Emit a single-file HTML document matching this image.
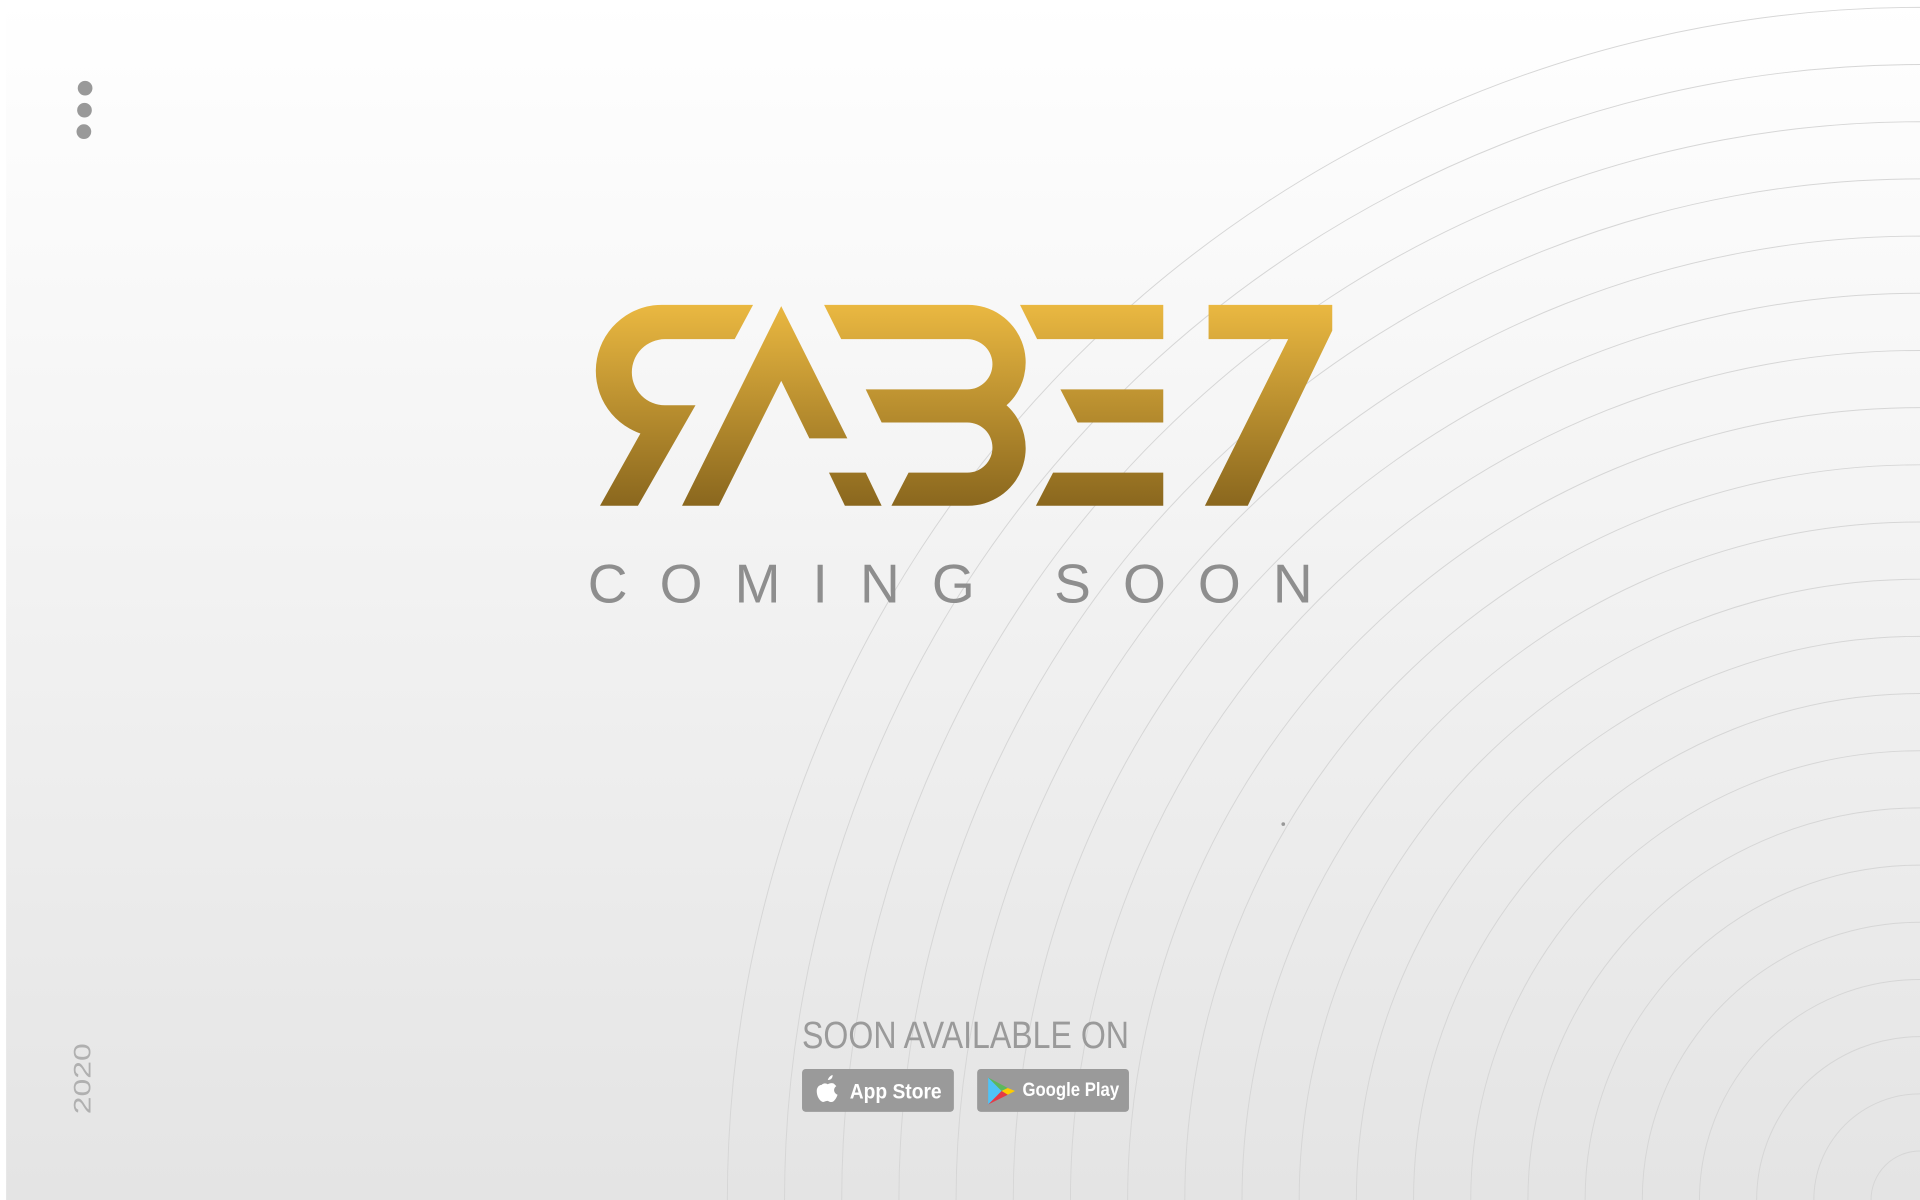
<!DOCTYPE html>
<html><head><meta charset="utf-8"><style>
html,body{margin:0;padding:0;width:1920px;height:1200px;overflow:hidden;background:#fff}
svg{position:absolute;left:0;top:0;display:block}
</style></head><body>
<svg width="1920" height="1200" viewBox="0 0 1568 980" xmlns="http://www.w3.org/2000/svg">
<defs>
<linearGradient id="bg" x1="0" y1="0" x2="0" y2="1"><stop offset="0" stop-color="#ffffff"/><stop offset="1" stop-color="#e4e4e4"/></linearGradient>
<linearGradient id="gold" gradientUnits="userSpaceOnUse" x1="0" y1="249" x2="0" y2="413"><stop offset="0" stop-color="#eab841"/><stop offset="1" stop-color="#8a671e"/></linearGradient>
</defs>
<rect x="0" y="0" width="1568" height="980" fill="url(#bg)"/>
<rect x="0" y="0" width="5" height="980" fill="#fff"/>
<g fill="none" stroke="#d6d6d6" stroke-width="0.8">
<circle cx="1568" cy="980" r="40"/><circle cx="1568" cy="980" r="86.7"/><circle cx="1568" cy="980" r="133.4"/><circle cx="1568" cy="980" r="180.1"/><circle cx="1568" cy="980" r="226.8"/><circle cx="1568" cy="980" r="273.5"/><circle cx="1568" cy="980" r="320.2"/><circle cx="1568" cy="980" r="366.9"/><circle cx="1568" cy="980" r="413.6"/><circle cx="1568" cy="980" r="460.3"/><circle cx="1568" cy="980" r="507"/><circle cx="1568" cy="980" r="553.7"/><circle cx="1568" cy="980" r="600.4"/><circle cx="1568" cy="980" r="647.1"/><circle cx="1568" cy="980" r="693.8"/><circle cx="1568" cy="980" r="740.5"/><circle cx="1568" cy="980" r="787.2"/><circle cx="1568" cy="980" r="833.9"/><circle cx="1568" cy="980" r="880.6"/><circle cx="1568" cy="980" r="927.3"/><circle cx="1568" cy="980" r="974"/>
</g>
<circle cx="1048" cy="673" r="1.5" fill="#999"/>
<g fill="#999"><circle cx="69.5" cy="72" r="6"/><circle cx="69" cy="90" r="6"/><circle cx="68.5" cy="107.5" r="6"/></g>
<g fill="url(#gold)">
<path d="M543,249 L615,249 L600,277 L543,277 A27,27 0 0 0 543,331 L568,331 L521,413 L490,413 L523,354 A54,54 0 0 1 543,249 Z"/>
<path d="M638,250 L692,358 L661,358 L638,311 L587,413 L557,413 Z"/>
<path d="M677,386 L707,386 L720,413 L690,413 Z"/>
<path d="M673,249 L790,249 A47,47 0 0 1 822,331 A47,47 0 0 1 790,413 L728,413 L742,386 L790,386 A20.5,20.5 0 0 0 790,345 L720,345 L707,318 L790,318 A20.5,20.5 0 0 0 790,277 L687,277 Z"/>
<path d="M833,249 L950,249 L950,277 L847,277 Z"/>
<path d="M866,318 L950,318 L950,345 L880,345 Z"/>
<path d="M860,386 L950,386 L950,413 L846,413 Z"/>
<path d="M987,249 L1088,249 L1088,270 L1019,413 L984,413 L1052,277 L987,277 Z"/>
</g>
<text x="480" y="492" font-family="Liberation Sans, sans-serif" font-size="45" fill="#8e8e8e" textLength="592" lengthAdjust="spacing">COMING SOON</text>
<text x="655" y="856" font-family="Liberation Sans, sans-serif" font-size="31" fill="#9a9a9a" textLength="267" lengthAdjust="spacingAndGlyphs">SOON AVAILABLE ON</text>
<rect x="655" y="873" width="124" height="35" rx="3" fill="#9a9a9a"/>
<rect x="798" y="873" width="124" height="35" rx="3" fill="#9a9a9a"/>
<path d="M676,882 C677,879 679,878 680,878 C680,880 679,882 676,882 Z M671,886 C673,884 675,885 676,885.5 C677,885 679,884 681,885 C682,886 682.5,886.5 683,887 C680,889 681,893 684,894 C683,897 681,900 679,900 C677,900 677,899 675.5,899 C674,899 673,900 672,900 C669,899 667,895 667,891 C667,888 669,886 671,886 Z" fill="#fff"/>
<text x="694" y="897" font-family="Liberation Sans, sans-serif" font-size="17" font-weight="bold" fill="#fff" textLength="75" lengthAdjust="spacingAndGlyphs">App Store</text>
<path d="M807,880 L818,891 L807,902 Z" fill="#4fc3f7"/>
<path d="M807,880 L823,888.5 L818,891 Z" fill="#5cb85c"/>
<path d="M823,888.5 L829,891 L823,894 L818,891 Z" fill="#ffcc00"/>
<path d="M807,902 L818,891 L823,894 Z" fill="#e53945"/>
<text x="835" y="895" font-family="Liberation Sans, sans-serif" font-size="16" font-weight="bold" fill="#fff" textLength="79" lengthAdjust="spacingAndGlyphs">Google Play</text>
<text transform="translate(74,910) rotate(-90)" font-family="Liberation Sans, sans-serif" font-size="20" fill="#b0b0b0" textLength="58" lengthAdjust="spacingAndGlyphs">2020</text>
</svg>
</body></html>
